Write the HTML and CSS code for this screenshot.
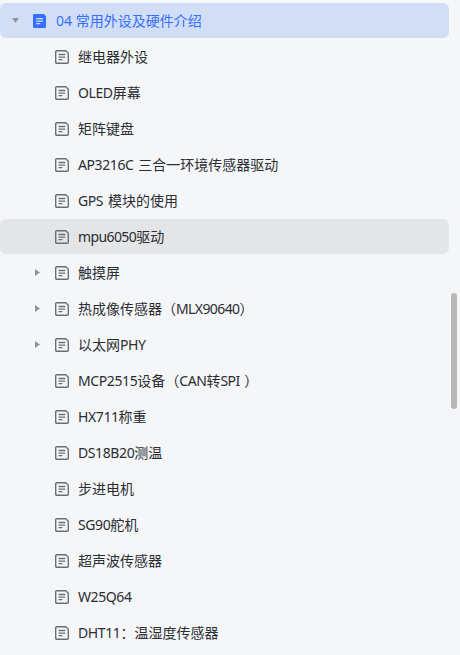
FILE: index.html
```html
<!DOCTYPE html>
<html lang="zh-CN">
<head>
	<meta charset="UTF-8">
	<title>04 常用外设及硬件介绍</title>
	<link rel="stylesheet" href="styles.css">
</head>
<body>

<!-- document icons, used by every row -->
<svg class="sprite">
	<symbol id="doc" viewBox="0 0 14 14">
		<path d="M1.7 .7H10.8L13.3 3.2V12.3A1 1 0 0 1 12.3 13.3H1.7A1 1 0 0 1 .7 12.3V1.7A1 1 0 0 1 1.7 .7Z" fill="none" stroke="currentColor" stroke-width="1.4"/>
		<path d="M3.5 4.5H10.3M3.5 7.2H10.3M3.5 9.7H7.5" stroke="currentColor" stroke-width="1.3"/>
	</symbol>
	<symbol id="doc-fill" viewBox="0 0 14 14">
		<path d="M1.3 0H10.8L13 2.2V12.7A1.3 1.3 0 0 1 11.7 14H1.3A1.3 1.3 0 0 1 0 12.7V1.3A1.3 1.3 0 0 1 1.3 0Z" fill="currentColor"/>
		<path d="M3.2 4.7H10M3.2 7.2H10M3.2 9.6H7.3" stroke="#d2def5" stroke-width="1.2"/>
	</symbol>
</svg>

<nav class="tree">
	<a class="row top"><i class="arrow down"></i><svg class="icon"><use href="#doc-fill"/></svg><span>04 常用外设及硬件介绍</span></a>
	<a class="row"><svg class="icon"><use href="#doc"/></svg><span>继电器外设</span></a>
	<a class="row"><svg class="icon"><use href="#doc"/></svg><span><span class="en">OLED</span>屏幕</span></a>
	<a class="row"><svg class="icon"><use href="#doc"/></svg><span>矩阵键盘</span></a>
	<a class="row"><svg class="icon"><use href="#doc"/></svg><span><span class="en">AP3216C </span>三合一环境传感器驱动</span></a>
	<a class="row"><svg class="icon"><use href="#doc"/></svg><span><span class="en">GPS </span>模块的使用</span></a>
	<a class="row hover"><svg class="icon"><use href="#doc"/></svg><span><span class="en tight">mpu6050</span>驱动</span></a>
	<a class="row parent"><i class="arrow"></i><svg class="icon"><use href="#doc"/></svg><span>触摸屏</span></a>
	<a class="row parent"><i class="arrow"></i><svg class="icon"><use href="#doc"/></svg><span>热成像传感器（<span class="en tight">MLX90640</span>）</span></a>
	<a class="row parent"><i class="arrow"></i><svg class="icon"><use href="#doc"/></svg><span>以太网<span class="en">PHY</span></span></a>
	<a class="row"><svg class="icon"><use href="#doc"/></svg><span><span class="en">MCP2515</span>设备（<span class="en">CAN</span>转<span class="en tight">SPI </span>）</span></a>
	<a class="row"><svg class="icon"><use href="#doc"/></svg><span><span class="en">HX711</span>称重</span></a>
	<a class="row"><svg class="icon"><use href="#doc"/></svg><span><span class="en">DS18B20</span>测温</span></a>
	<a class="row"><svg class="icon"><use href="#doc"/></svg><span>步进电机</span></a>
	<a class="row"><svg class="icon"><use href="#doc"/></svg><span><span class="en">SG90</span>舵机</span></a>
	<a class="row"><svg class="icon"><use href="#doc"/></svg><span>超声波传感器</span></a>
	<a class="row"><svg class="icon"><use href="#doc"/></svg><span><span class="en">W25Q64</span></span></a>
	<a class="row"><svg class="icon"><use href="#doc"/></svg><span><span class="en">DHT11</span>：温湿度传感器</span></a>
</nav>
<div class="scrollbar"></div>

</body>
</html>
```
FILE: styles.css
```css
body{
	margin: 0;
	height: 655px;
	overflow: hidden;
	background: #f5f6f8;
	color: #2a2d32;
	font: 14px/20px "Noto Sans", "Noto Sans CJK SC", sans-serif;
}

.sprite{
	display: none;
}

.tree{
	width: 449px;
	padding-top: 3px;
}

.row{
	display: flex;
	align-items: center;
	box-sizing: border-box;
	height: 35px;
	margin-bottom: 1px;
	padding-left: 55px;
	border-radius: 6px;
	white-space: nowrap;
}

.row.parent{
	padding-left: 35px;
}

.row.top{
	padding-left: 12px;
	background: #d2def5;
	color: #3370ff;
}

.row.hover{
	background: #e4e5e7;
}

/* latin part of a title */
.en{
	letter-spacing: -0.4px;
	word-spacing: 1.5px;
}

.en.tight{
	letter-spacing: -0.6px;
}

.icon{
	flex: none;
	width: 14px;
	height: 14px;
	margin-right: 9px;
	color: #6a6f77;
}

.top .icon{
	color: #3370ff;
}

/* small triangles in front of the open and closed groups */
.arrow{
	flex: none;
	width: 5px;
	height: 7px;
	margin-right: 15px;
	background: #91959b;
	clip-path: polygon(0 0, 100% 50%, 0 100%);
}

.arrow.down{
	width: 7px;
	height: 5px;
	margin-right: 14px;
	clip-path: polygon(0 0, 100% 0, 50% 100%);
}

.scrollbar{
	position: absolute;
	top: 293px;
	left: 451px;
	width: 6px;
	height: 116px;
	border-radius: 3px;
	background: #b8b8b9;
}
```
